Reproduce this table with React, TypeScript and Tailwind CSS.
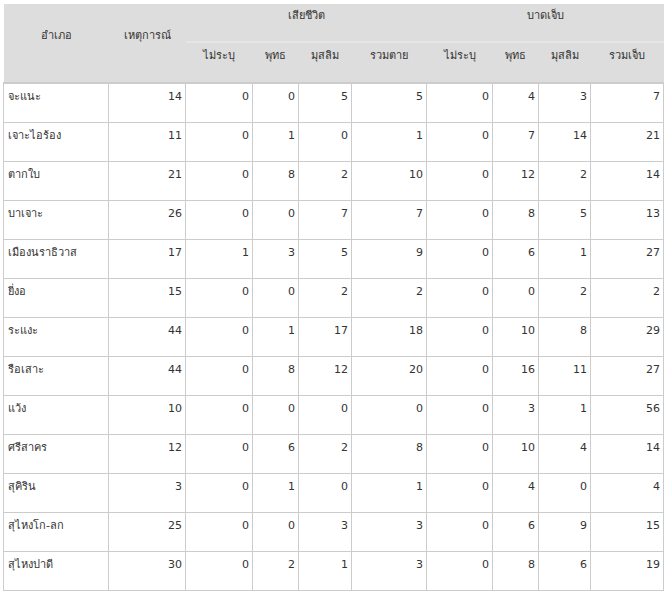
const rows: [string, number[]][] = [
  ['จะแนะ', [14, 0, 0, 5, 5, 0, 4, 3, 7]],
  ['เจาะไอร้อง', [11, 0, 1, 0, 1, 0, 7, 14, 21]],
  ['ตากใบ', [21, 0, 8, 2, 10, 0, 12, 2, 14]],
  ['บาเจาะ', [26, 0, 0, 7, 7, 0, 8, 5, 13]],
  ['เมืองนราธิวาส', [17, 1, 3, 5, 9, 0, 6, 1, 27]],
  ['ยี่งอ', [15, 0, 0, 2, 2, 0, 0, 2, 2]],
  ['ระแงะ', [44, 0, 1, 17, 18, 0, 10, 8, 29]],
  ['รือเสาะ', [44, 0, 8, 12, 20, 0, 16, 11, 27]],
  ['แว้ง', [10, 0, 0, 0, 0, 0, 3, 1, 56]],
  ['ศรีสาคร', [12, 0, 6, 2, 8, 0, 10, 4, 14]],
  ['สุคิริน', [3, 0, 1, 0, 1, 0, 4, 0, 4]],
  ['สุไหงโก-ลก', [25, 0, 0, 3, 3, 0, 6, 9, 15]],
  ['สุไหงปาดี', [30, 0, 2, 1, 3, 0, 8, 6, 19]],
]

const widths = [105, 77, 67, 46, 53, 75, 66, 46, 52, 73]
const subHeads = ['ไม่ระบุ', 'พุทธ', 'มุสลิม', 'รวมตาย', 'ไม่ระบุ', 'พุทธ', 'มุสลิม', 'รวมเจ็บ']

export default function App() {
  return (
    <div className="pt-[4px] pl-[3px] bg-white min-h-[594px]" style={{ fontFamily: 'Tahoma, "DejaVu Sans", sans-serif' }}>
      <table className="border-collapse table-fixed w-[660px] text-[11px] text-[#333]">
        <colgroup>
          {widths.map((w, i) => (
            <col key={i} style={{ width: w }} />
          ))}
        </colgroup>
        <thead className="bg-[#dddddd] text-[#333]">
          <tr className="h-[38px]">
            <th rowSpan={2} className="font-normal align-middle pb-[14px] text-center border-b-2 border-[#cccccc]">อำเภอ</th>
            <th rowSpan={2} className="font-normal align-middle pb-[14px] text-center border-b-2 border-[#cccccc]">เหตุการณ์</th>
            <th colSpan={4} className="font-normal align-top pt-[4px] text-center border-b-2 border-[#e6e6e6]">เสียชีวิต</th>
            <th colSpan={4} className="font-normal align-top pt-[4px] text-center border-b-2 border-[#e6e6e6]">บาดเจ็บ</th>
          </tr>
          <tr className="h-[41px]">
            {subHeads.map((h, i) => (
              <th key={i} className="font-normal align-top pt-[5px] text-center border-b-2 border-[#cccccc]">
                {h}
              </th>
            ))}
          </tr>
        </thead>
        <tbody>
          {rows.map(([name, vals]) => (
            <tr key={name} className="h-[39px]">
              <td className="border border-[#cccccc] align-top pt-[5px] pl-[4px]">{name}</td>
              {vals.map((v, i) => (
                <td key={i} className="border border-[#cccccc] align-top pt-[5px] pr-[3px] text-right">
                  {v}
                </td>
              ))}
            </tr>
          ))}
        </tbody>
      </table>
    </div>
  )
}
